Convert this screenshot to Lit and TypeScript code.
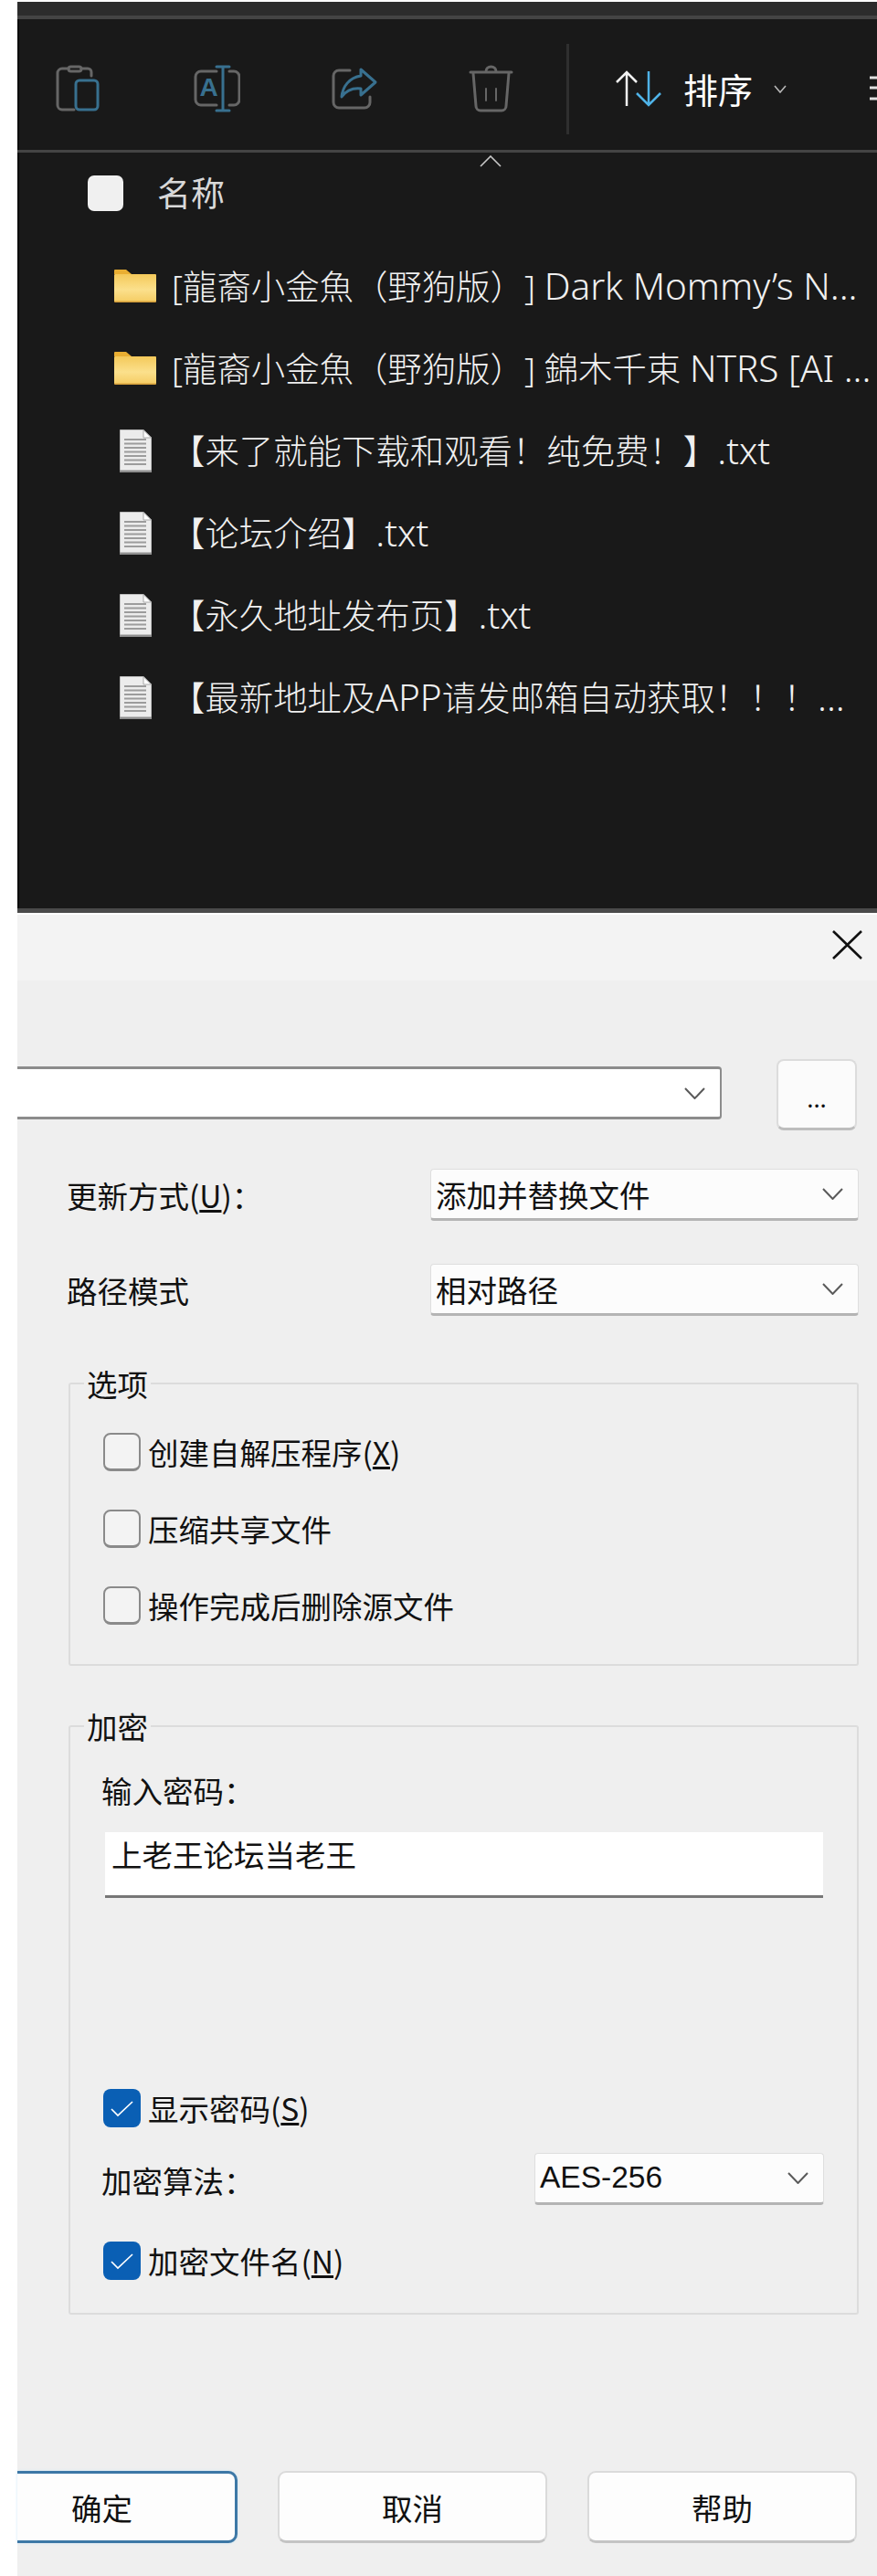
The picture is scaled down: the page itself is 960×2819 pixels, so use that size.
import { LitElement, html, css, svg } from "lit";
import { customElement } from "lit/decorators.js";

const chevron = html`<svg class="chev" viewBox="0 0 23 13"><path d="M1 1 L11.5 12 L22 1" fill="none" stroke="#5a5a5a" stroke-width="2"/></svg>`;
const tick = svg`<path d="M9 22 L16 29 L32 14" fill="none" stroke="#fff" stroke-width="1.7"/>`;

const folderIcon = html`<svg class="folder" viewBox="0 0 46 36">
  <defs>
    <linearGradient id="fg" x1="0" y1="0" x2="0" y2="1">
      <stop offset="0" stop-color="#f4c95a"/><stop offset="0.55" stop-color="#fbe08c"/><stop offset="0.92" stop-color="#f6cf69"/><stop offset="1" stop-color="#c98f2c"/>
    </linearGradient>
  </defs>
  <path d="M0 1 Q0 0 1 0 H13 L19 5 H0 Z" fill="#e9ae32"/>
  <rect x="0" y="5" width="46" height="31" rx="1" fill="url(#fg)"/>
</svg>`;

const fileIcon = html`<svg class="file" viewBox="0 0 35 47">
  <path d="M0.5 0.5 H26 L34.5 9 V46.5 H0.5 Z" fill="#ececec" stroke="#bdbdbd" stroke-width="1"/>
  <path d="M26 0.5 V9 H34.5 Z" fill="#fff" stroke="#a8a8a8" stroke-width="1"/>
  <path d="M5 11 H29 M5 15.5 H29 M5 20 H29 M5 24.5 H29 M5 29 H29 M5 33.5 H29 M5 38 H29" stroke="#9c9c9c" stroke-width="2"/>
  <rect x="0" y="44.5" width="35" height="2.5" fill="#8f8f8f"/>
</svg>`;

@customElement("app-root")
export class AppRoot extends LitElement {
  static styles = css`
    :host { display: block; width: 960px; height: 2819px; box-sizing: border-box; padding-left: 19px; background: #fff; overflow: hidden; font-family: "Noto Sans CJK SC", "Noto Sans", sans-serif; }
    .explorer { height: 999px; box-sizing: border-box; border-top: 2px solid #fff; background: #191919; border-bottom: 5px solid #4a4a4a; box-shadow: inset 2px 0 0 #0b0b0b; color: #e8e8e8; }
    .band { height: 15px; background: #2c2c2c; border-bottom: 4px solid #444; }
    .toolbar { height: 146px; box-sizing: border-box; padding: 9px 0 0 41px; display: flex; align-items: center; border-bottom: 3px solid #444; overflow: hidden; }
    .tb-ico { width: 52px; height: 52px; margin-right: 99px; flex: none; fill: none; stroke-width: 3; stroke-linecap: round; stroke-linejoin: round; }
    .tb-ico.last { margin-right: 55px; }
    .g { stroke: #666; }
    .b { stroke: #38708f; }
    .a-text { font: 700 28px "Liberation Sans", sans-serif; fill: #38708f; stroke: none; }
    .sep { width: 3px; height: 99px; background: #2f2f2f; flex: none; }
    .sort { width: 50px; height: 40px; margin-left: 51px; flex: none; }
    .sort-label { margin-left: 24px; font-size: 38px; line-height: 44px; color: #fff; flex: none; }
    .small-chev { width: 14px; height: 9px; margin-left: 23px; flex: none; }
    .menu { width: 14px; height: 30px; margin-left: 91px; flex: none; }
    .caret { display: block; width: 24px; height: 13px; margin: 3px 0 0 506px; }
    .header { display: flex; align-items: center; gap: 37px; padding-left: 77px; margin-top: 9px; height: 39px; }
    .all { width: 39px; height: 39px; border-radius: 7px; background: #f0f0f0; flex: none; }
    .name { font-size: 37px; line-height: 44px; color: #d8d8d8; margin-bottom: 3px; }
    .rows { margin-top: 37px; }
    .row { height: 90px; display: flex; align-items: center; white-space: nowrap; font-size: 37.4px; color: #f0f0f0; font-weight: 300; font-family: "Noto Sans", "Noto Sans CJK SC", sans-serif; text-spacing-trim: space-all; }
    .row-text { line-height: 50px; }
    .lat { font-size: 40.5px; }
    .slot { width: 46px; margin: 0 17px 0 106px; flex: none; display: flex; justify-content: center; }
    .row.doc .slot { margin-right: 16px; }
    .folder { width: 46px; height: 36px; display: block; }
    .file { width: 35px; height: 47px; display: block; }

    .dialog { background: #efefef; border-top: 2px solid #fff; height: 1820px; box-sizing: border-box; color: #111; font-size: 33.5px; }
    .title { height: 72px; background: #f3f3f3; display: flex; justify-content: flex-end; padding: 17px 16px 0 0; box-sizing: border-box; }
    .close { width: 33px; height: 32px; display: block; }
    .path-row { display: flex; align-items: center; margin-top: 86px; padding-right: 22px; }
    .path-select { width: 771px; height: 58px; box-sizing: border-box; background: #fff; border: solid #8c8c8c; border-width: 3px 2px 3px 0; border-radius: 0 4px 4px 0; display: flex; align-items: center; justify-content: flex-end; padding-right: 16px; margin-top: -4px; }
    .browse { width: 88px; height: 78px; box-sizing: border-box; margin-left: 60px; background: #fbfbfb; border: 2px solid #dcdcdc; border-bottom: 3px solid #bdbdbd; border-radius: 8px; text-align: center; font-size: 26px; line-height: 80px; }
    .chev { width: 23px; height: 13px; display: block; flex: none; }
    .form-row { display: flex; align-items: center; padding-left: 54px; margin-top: 47px; height: 57px; }
    .form-row.first { margin-top: 42px; }
    .lbl { width: 398px; line-height: 40px; flex: none; }
    .select { box-sizing: border-box; height: 57px; background: #fcfcfc; border: 1px solid #dedede; border-bottom: 3px solid #b4b4b4; border-radius: 4px; display: flex; align-items: center; justify-content: space-between; padding: 0 16px 0 5px; line-height: 40px; }
    .wide { width: 469px; }
    .narrow { width: 317px; }
    .latin { font-family: "Liberation Sans", sans-serif; }
    fieldset { margin: 0 20px 0 56px; border: 2px solid #dcdcdc; border-radius: 3px; min-width: 0; }
    legend { padding: 0 3px; line-height: 34px; font-size: 33.5px; }
    .g1 { margin-top: 57px; padding: 37px 0 43px 15px; }
    .g2 { margin-top: 49px; padding: 33px 0 36px 15px; }
    .inner { margin-left: 21px; }
    .checks { display: flex; flex-direction: column; gap: 42px; }
    .check { display: flex; align-items: center; gap: 8px; height: 42px; line-height: 40px; white-space: nowrap; }
    .box { width: 41px; height: 42px; box-sizing: border-box; border: 2px solid #8a8a8a; border-bottom-width: 3px; border-radius: 8px; background: #f3f3f3; flex: none; }
    .box.on { border: none; background: #0a5fb4; }
    .box svg { display: block; width: 41px; height: 42px; }
    .input-label { line-height: 40px; margin-left: -2px; }
    .input { width: 786px; height: 72px; box-sizing: border-box; margin: 26px 0 0 2px; background: #fff; border-bottom: 3px solid #777; padding: 4px 7px 0; line-height: 40px; }
    .gap { margin-top: 209px; }
    .algo { display: flex; align-items: center; margin-top: 28px; height: 56px; }
    .algo .lbl { width: 474px; margin: 4px 0 0 -2px; }
    .mt { margin-top: 41px; }
    .footer { display: flex; gap: 44px; margin-top: 171px; }
    .btn { height: 79px; box-sizing: border-box; background: #fdfdfd; border: 2px solid #dadada; border-bottom: 3px solid #c4c4c4; border-radius: 9px; width: 295px; display: flex; align-items: center; justify-content: center; }
    .btn.ok { width: 241px; border: solid #3d78a6; border-width: 3px 3px 3px 0; border-radius: 0 10px 10px 0; box-shadow: 0 0 3px #cbe6f5; padding-right: 53px; }
  `;

  private check(label: unknown, on = false) {
    return html`<div class="check">
      <span class="box ${on ? "on" : ""}">${on ? html`<svg viewBox="0 0 41 42">${tick}</svg>` : ""}</span>
      <span>${label}</span>
    </div>`;
  }

  render() {
    const files: [unknown, boolean][] = [
      [html`[龍裔小金魚（野狗版）] <span class="lat">Dark Mommy’s N...</span>`, true],
      [html`[龍裔小金魚（野狗版）] 錦木千束 <span class="lat">NTRS [AI ...</span>`, true],
      [html`【来了就能下载和观看！纯免费！】<span class="lat">.txt</span>`, false],
      [html`【论坛介绍】<span class="lat">.txt</span>`, false],
      [html`【永久地址发布页】<span class="lat">.txt</span>`, false],
      [html`【最新地址及<span class="lat">APP</span>请发邮箱自动获取！！！<span class="lat">...</span>`, false],
    ];
    return html`
      <section class="explorer">
        <div class="band"></div>
        <div class="toolbar">
          <svg class="tb-ico" viewBox="0 0 52 52">
            <path class="g" d="M15 4 H8 a5 5 0 0 0 -5 5 V44 a5 5 0 0 0 5 5 H21"/>
            <path class="g" d="M29 4 h7 a4 4 0 0 1 4 4 v4"/>
            <rect class="g" x="15" y="2" width="14" height="5" rx="2.5"/>
            <rect class="b" x="23" y="17" width="24" height="32" rx="4"/>
          </svg>
          <svg class="tb-ico" viewBox="0 0 52 52">
            <path class="g" d="M26 7 H9 a6 6 0 0 0 -6 6 V38 a6 6 0 0 0 6 6 H26"/>
            <path class="g" d="M40 7 h5 a6 6 0 0 1 6 6 V38 a6 6 0 0 1 -6 6 h-5"/>
            <path class="b" d="M33 2 V50 M26 2 H40 M26 50 H40"/>
            <text class="a-text" x="7.5" y="34">A</text>
          </svg>
          <svg class="tb-ico" viewBox="0 0 52 52">
            <path class="g" d="M21 6 H9 a6 6 0 0 0 -6 6 V41 a6 6 0 0 0 6 6 H37 a6 6 0 0 0 6 -6 V35"/>
            <path class="b" d="M33 5 L49 19 L33 33 V26 C24 25 17 28 12 35 C13 24 20 14 33 12 Z"/>
          </svg>
          <svg class="tb-ico last" viewBox="0 0 52 52">
            <path class="g" d="M2 8 H47 M19 7 a5.5 5 0 0 1 11 0"/>
            <path class="g" d="M5 9 L8 45 a5 5 0 0 0 5 5 H36 a5 5 0 0 0 5 -5 L44 9"/>
            <path class="g" d="M19 26 V39 M30 26 V39" stroke-width="2"/>
          </svg>
          <span class="sep"></span>
          <svg class="sort" viewBox="0 0 50 40" fill="none" stroke-width="2.5">
            <path d="M12 39 V2 M1 13 L12 2 L23 13" stroke="#f2f2f2"/>
            <path d="M36 1 V38 M23 25 L36 38 L49 25" stroke="#4fb3e8"/>
          </svg>
          <span class="sort-label">排序</span>
          <svg class="small-chev" viewBox="0 0 14 9"><path d="M1 1 L7 8 L13 1" fill="none" stroke="#b8b8b8" stroke-width="1.6"/></svg>
          <svg class="menu" viewBox="0 0 14 30"><path d="M0 3 H14 M0 14 H14 M0 26 H14" stroke="#e0e0e0" stroke-width="3"/></svg>
        </div>
        <svg class="caret" viewBox="0 0 24 13"><path d="M1 12 L12 1 L23 12" fill="none" stroke="#c8c8c8" stroke-width="1.6"/></svg>
        <div class="header"><span class="all"></span><span class="name">名称</span></div>
        <div class="rows">
          ${files.map(([n, isFolder]) => html`
            <div class="row ${isFolder ? "" : "doc"}">
              <span class="slot">${isFolder ? folderIcon : fileIcon}</span>
              <span class="row-text">${n}</span>
            </div>`)}
        </div>
      </section>
      <section class="dialog">
        <div class="title">
          <svg class="close" viewBox="0 0 33 32"><path d="M1 1 L32 31 M32 1 L1 31" stroke="#111" stroke-width="2.6"/></svg>
        </div>
        <div class="path-row">
          <div class="path-select">${chevron}</div>
          <div class="browse">...</div>
        </div>
        <div class="form-row first">
          <span class="lbl">更新方式(<u>U</u>)：</span>
          <div class="select wide"><span>添加并替换文件</span>${chevron}</div>
        </div>
        <div class="form-row">
          <span class="lbl">路径模式</span>
          <div class="select wide"><span>相对路径</span>${chevron}</div>
        </div>
        <fieldset class="g1">
          <legend>选项</legend>
          <div class="inner checks">
            ${this.check(html`创建自解压程序(<u>X</u>)`)}
            ${this.check("压缩共享文件")}
            ${this.check("操作完成后删除源文件")}
          </div>
        </fieldset>
        <fieldset class="g2">
          <legend>加密</legend>
          <div class="inner">
            <div class="input-label">输入密码：</div>
            <div class="input">上老王论坛当老王</div>
            <div class="gap">${this.check(html`显示密码(<u>S</u>)`, true)}</div>
            <div class="algo">
              <span class="lbl">加密算法：</span>
              <div class="select narrow"><span class="latin">AES-256</span>${chevron}</div>
            </div>
            <div class="mt">${this.check(html`加密文件名(<u>N</u>)`, true)}</div>
          </div>
        </fieldset>
        <div class="footer">
          <div class="btn ok">确定</div>
          <div class="btn">取消</div>
          <div class="btn">帮助</div>
        </div>
      </section>
    `;
  }
}
